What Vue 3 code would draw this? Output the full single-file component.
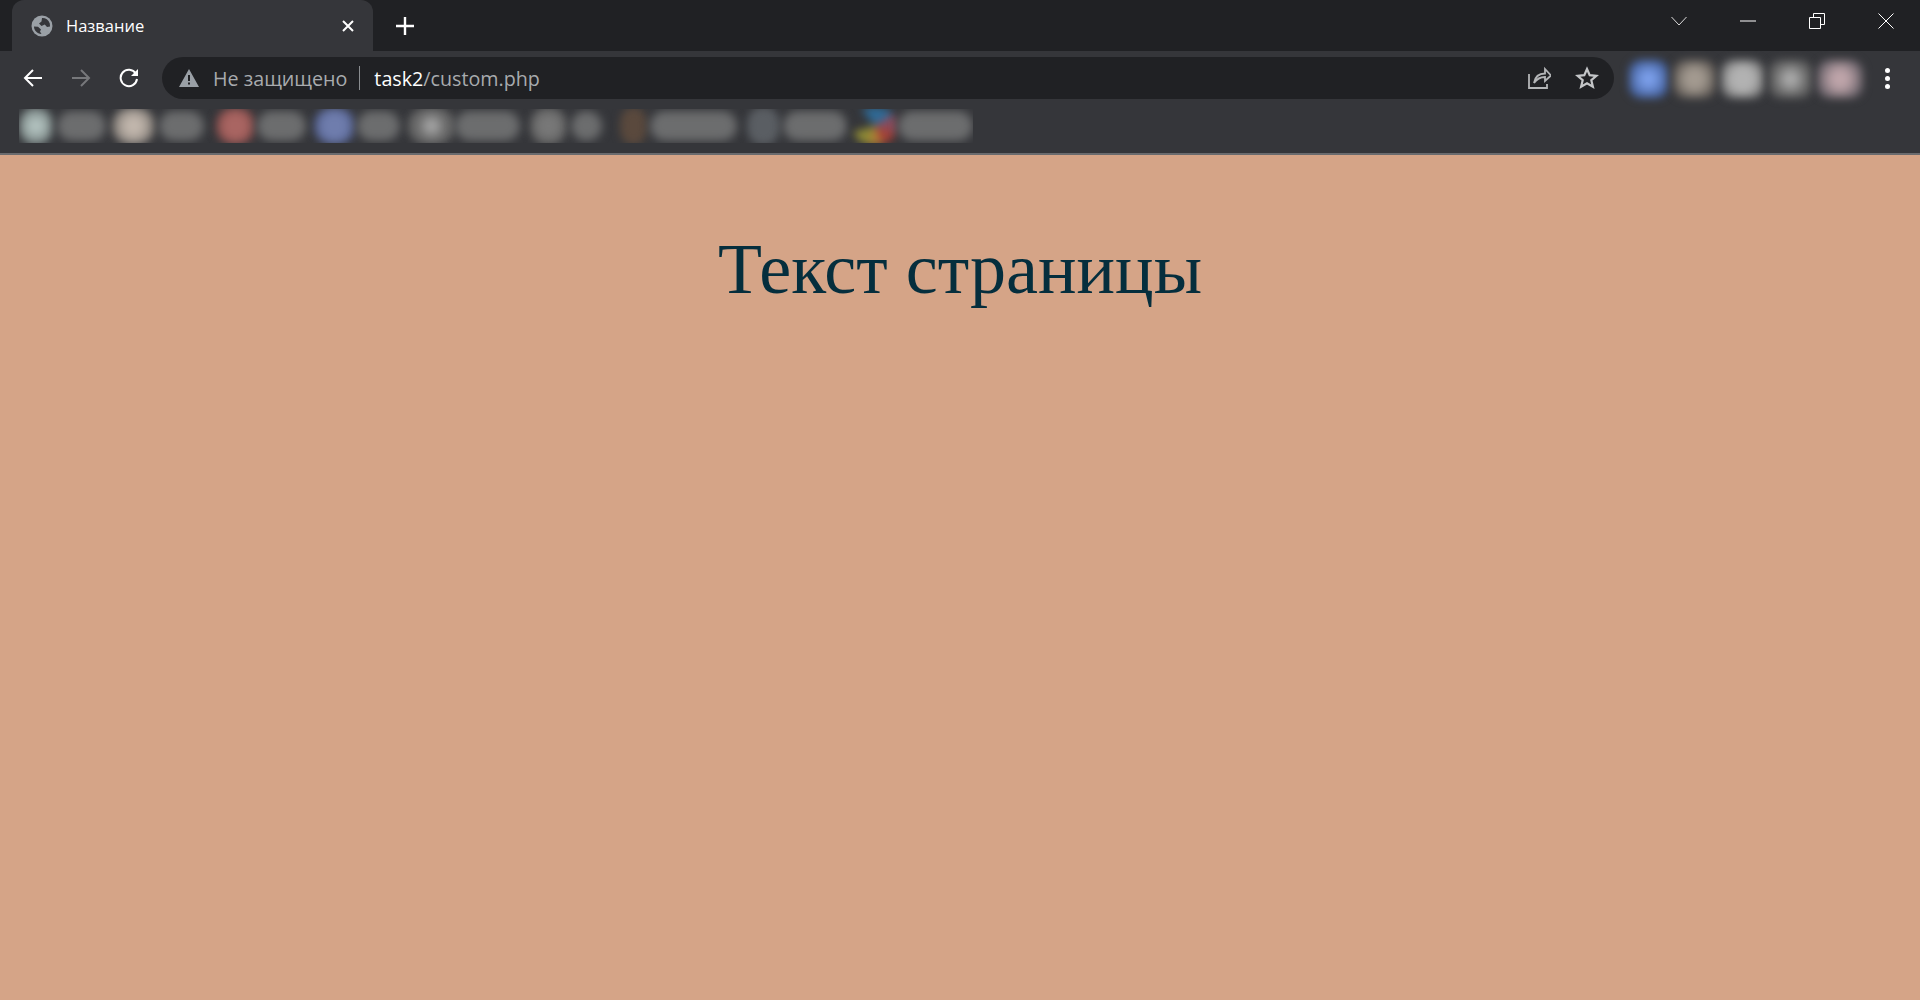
<script setup>
const bookmarks = [
  { icon: 34, text: 49, gap: 4, next: 6, color: "radial-gradient(circle, #b5c5c2 15%, #6f7a79 80%)" },
  { icon: 43, text: 45, gap: 4, next: 12, color: "radial-gradient(circle, #c2b7ad 25%, #6f6b67 85%)" },
  { icon: 39, text: 49, gap: 2, next: 8, color: "radial-gradient(circle, #a96562 40%, #6a3a39 90%)" },
  { icon: 41, text: 43, gap: 2, next: 8, color: "radial-gradient(circle, #6f7dad 40%, #404d7a 90%)" },
  { icon: 47, text: 65, gap: 0, next: 10, color: "radial-gradient(circle, #acacac 6%, #666 50%)" },
  { icon: 37, text: 31, gap: 4, next: 18, color: "radial-gradient(circle, #787878 30%, #585858 85%)" },
  { icon: 27, text: 87, gap: 3, next: 10, color: "#5a493d" },
  { icon: 33, text: 64, gap: 3, next: 6, color: "#5a5e63" },
  { icon: 44, text: 75, gap: 1, next: 0, color: "conic-gradient(from 320deg, #2f6a96 0 27%, #8c4a5a 27% 42%, #a33f35 42% 55%, #b07f35 55% 66%, #8f8a35 66% 82%, #35363a 82%)" },
];
const avatars = [
  { size: 39, gap: 5, color: "radial-gradient(circle, #7ea2ee 15%, #3a5690 85%)" },
  { size: 43, gap: 5, color: "radial-gradient(circle, #a39a90 30%, #55504c 85%)" },
  { size: 43, gap: 5, color: "radial-gradient(circle, #b2b2b2 40%, #666 90%)" },
  { size: 43, gap: 5, color: "radial-gradient(circle, #b0b0b0 10%, #606060 65%)" },
  { size: 46, gap: 0, color: "radial-gradient(circle, #bfa5aa 25%, #5c5860 85%)" },
];
</script>

<template>
  <div class="window">
    <div class="tabstrip">
      <div class="tab">
        <svg class="favicon" viewBox="0 0 22 22" width="22" height="22">
          <circle cx="11" cy="11" r="10.500" fill="#9aa0a6" />
          <path d="M11 3c3-.3 6.500 1.500 7.800 5.500l.2 3-3 .5-2.200-2.500-3.300 1.500-2.500-2.500 2.500-2zM3 11.500l4 .2 3 2.800-1 2 1.500 2.500C6 18.500 3 15.500 3 11.500z" fill="#35363a" />
        </svg>
        <span class="tab-title">Название</span>
        <svg class="tab-close" viewBox="0 0 14 14" width="14" height="14">
          <path d="M2 2l10 10M12 2L2 12" stroke="#fff" stroke-width="2" fill="none" />
        </svg>
      </div>
      <svg class="new-tab" viewBox="0 0 20 20" width="20" height="20">
        <path d="M10 1v18M1 10h18" stroke="#fff" stroke-width="2.400" fill="none" />
      </svg>
      <div class="window-controls">
        <svg viewBox="0 0 16 10" width="16" height="10">
          <path d="M.5 1l7.500 8 7.500-8" stroke="#dcdcdc" fill="none" />
        </svg>
        <svg viewBox="0 0 16 2" width="16" height="2">
          <path d="M0 1h16" stroke="#fff" fill="none" />
        </svg>
        <svg viewBox="0 0 16 16" width="16" height="16">
          <path d="M.5 4.500h11v11H.5zM4.500 4.500V.5h11v11h-4" stroke="#fff" fill="none" />
        </svg>
        <svg viewBox="0 0 16 16" width="16" height="16">
          <path d="M.5.5l15 15M15.500.5l-15 15" stroke="#fff" fill="none" />
        </svg>
      </div>
    </div>

    <div class="toolbar">
      <div class="nav">
        <svg viewBox="0 0 20 20" width="20" height="20">
          <path d="M19 10H2M10 2l-8 8 8 8" stroke="#fff" stroke-width="2" fill="none" />
        </svg>
        <svg viewBox="0 0 20 20" width="20" height="20">
          <path d="M1 10h17M10 2l8 8-8 8" stroke="#77787b" stroke-width="2" fill="none" />
        </svg>
        <svg viewBox="0 0 20 20" width="20" height="20">
          <path d="M16.800 5.500A8.200 8.200 0 1 0 18 11" stroke="#fff" stroke-width="2" fill="none" />
          <path d="M19 1v7h-7z" fill="#fff" />
        </svg>
      </div>
      <div class="omnibox">
        <svg class="warn" viewBox="0 0 20 18" width="20" height="18">
          <path fill-rule="evenodd" d="M10 0l10 18H0zM9 6v6h2V6zm0 7.500v2h2v-2z" fill="#9aa0a6" />
        </svg>
        <span class="not-secure">Не защищено</span>
        <span class="sep"></span>
        <span class="url"><span class="host">task2</span>/custom.php</span>
        <svg class="share" viewBox="0 0 24 24" width="24" height="24">
          <path d="M2 8v14h18v-4M7 17c1-6 5-9.500 11-9.500V3l6 6.500L18 15v-4c-4 0-8 1.500-11 6z" stroke="#b4b6b8" stroke-width="1.800" fill="none" />
        </svg>
        <svg class="star" viewBox="0 0 24 24" width="24" height="24">
          <path d="M12 3l2.700 6.200 6.700.6-5.100 4.400 1.600 6.600L12 17.300l-5.900 3.500 1.600-6.600-5.100-4.400 6.700-.6z" stroke="#c4c6c8" stroke-width="2.200" fill="none" />
        </svg>
      </div>
      <div class="extensions">
        <span
          v-for="(a, i) in avatars"
          :key="i"
          class="avatar"
          :style="{ width: a.size + 'px', marginRight: a.gap + 'px', background: a.color }"
        ></span>
      </div>
      <div class="menu-dots"><i></i><i></i><i></i></div>
    </div>

    <div class="bookmarks">
      <div class="bookmarks-clip">
        <template v-for="(b, i) in bookmarks" :key="i">
          <span class="bm-icon" :style="{ width: b.icon + 'px', background: b.color }"></span>
          <span
            class="bm-text"
            :style="{ width: b.text + 'px', marginLeft: b.gap + 'px', marginRight: b.next + 'px' }"
          ></span>
        </template>
      </div>
    </div>

    <main class="page">
      <h1>Текст страницы</h1>
    </main>
  </div>
</template>

<style>
html,
body {
  margin: 0;
  overflow: hidden;
}
</style>

<style scoped>
.window {
  height: 1000px;
  display: flex;
  flex-direction: column;
  font-family: "Open Sans", "Noto Sans", sans-serif;
}
.tabstrip {
  height: 51px;
  flex-shrink: 0;
  display: flex;
  align-items: center;
  background: #202124;
  padding-left: 12px;
}
.tab {
  width: 361px;
  height: 51px;
  box-sizing: border-box;
  display: flex;
  align-items: center;
  padding: 0 18px 0 19px;
  background: #35363a;
  border-radius: 12px 12px 0 0;
}
.favicon {
  margin-right: 13px;
}
.tab-title {
  color: #fff;
  font-size: 16.500px;
  flex: 1;
}
.new-tab {
  margin-left: 22px;
}
.window-controls {
  margin-left: auto;
  height: 42px;
  align-self: flex-start;
  display: flex;
  align-items: center;
  gap: 53px;
  padding-right: 26px;
}
.toolbar {
  height: 54px;
  flex-shrink: 0;
  display: flex;
  align-items: flex-start;
  background: #35363a;
}
.nav {
  width: 162px;
  height: 42px;
  margin-top: 6px;
  box-sizing: border-box;
  padding-left: 23px;
  display: flex;
  align-items: center;
  gap: 28px;
}
.omnibox {
  width: 1452px;
  height: 42px;
  margin-top: 6px;
  display: flex;
  align-items: center;
  background: #202124;
  border-radius: 21px;
  padding-left: 17px;
  box-sizing: border-box;
  font-size: 19.700px;
}
.not-secure {
  margin-left: 14px;
  color: #a8abae;
}
.sep {
  width: 1px;
  height: 24px;
  background: #8a8d90;
  margin: 0 14px 0 12px;
}
.url {
  color: #a8abae;
  flex: 1;
}
.host {
  color: #fff;
}
.star {
  margin: 0 15px 0 24px;
}
.extensions {
  margin-left: 15px;
  margin-top: 9px;
  display: flex;
  height: 38px;
}
.avatar {
  height: 38px;
  border-radius: 12px;
  filter: blur(4px);
}
.menu-dots {
  margin-left: 22px;
  height: 42px;
  margin-top: 6px;
  display: flex;
  flex-direction: column;
  align-items: center;
  justify-content: center;
  gap: 3px;
}
.menu-dots i {
  width: 5px;
  height: 5px;
  border-radius: 50%;
  background: #fff;
}
.bookmarks {
  height: 50px;
  flex-shrink: 0;
  box-sizing: border-box;
  padding: 4px 0 0 19px;
  background: #35363a;
  border-bottom: 2px solid #6a6b6e;
}
.bookmarks-clip {
  width: 954px;
  height: 34px;
  overflow: hidden;
  display: flex;
  align-items: center;
}
.bm-icon {
  height: 38px;
  flex-shrink: 0;
  border-radius: 45%;
  filter: blur(4px);
}
.bm-text {
  height: 30px;
  flex-shrink: 0;
  border-radius: 15px;
  background: #6c6d6e;
  filter: blur(5px);
}
.page {
  flex: 1;
  background: #d5a487;
  padding-top: 73px;
  text-align: center;
}
h1 {
  margin: 0;
  font-family: "Liberation Serif", serif;
  font-size: 72px;
  font-weight: 400;
  color: #052e3d;
}
</style>
